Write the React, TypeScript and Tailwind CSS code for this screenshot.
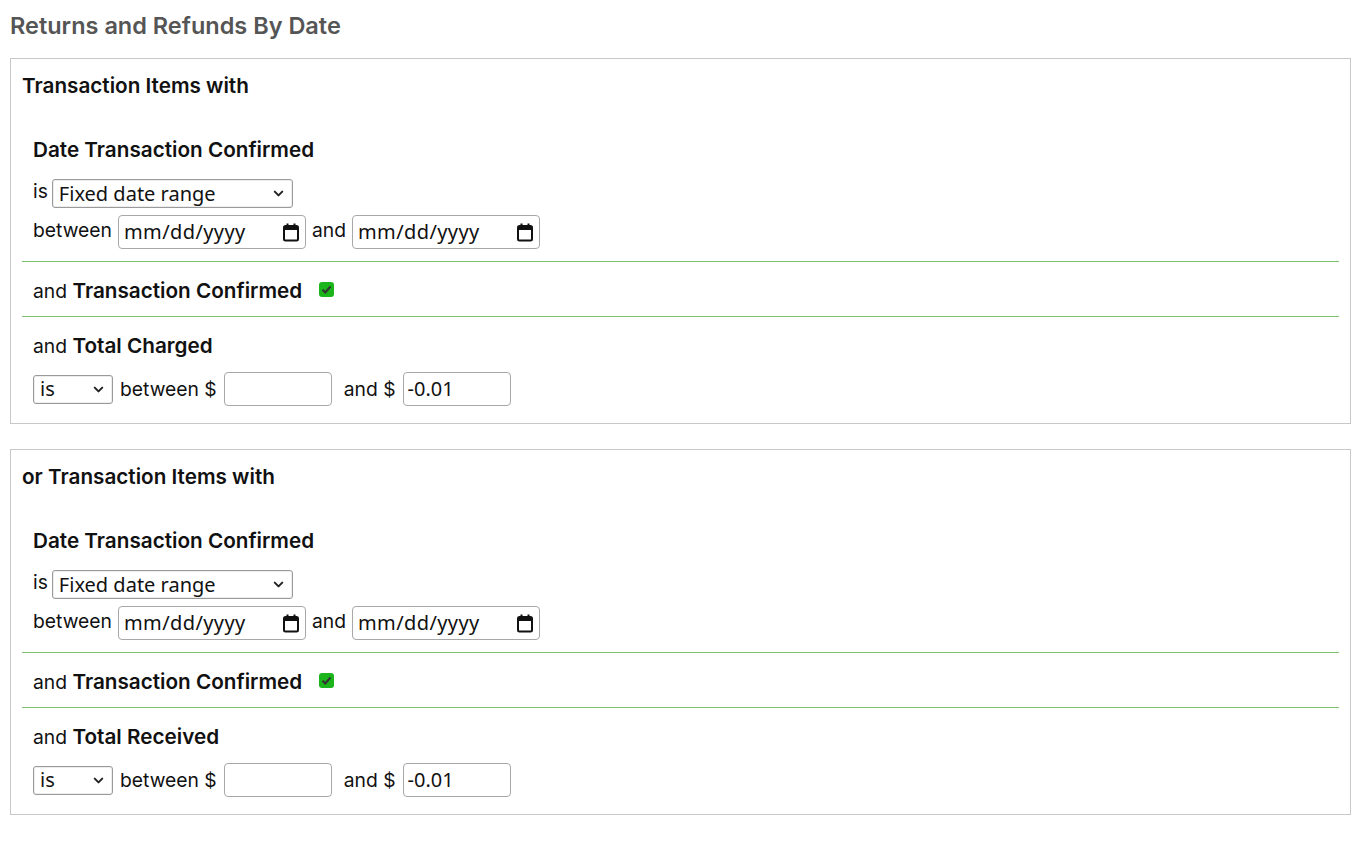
import { ChevronDown } from 'lucide-react'

const ctl = "font-['Segoe_UI','Noto_Sans',sans-serif] text-[20px] text-[#111]"

function Select({ value, w }: { value: string; w: string }) {
  return (
    <div className={`${w} h-[29px] flex items-center justify-between pl-[6px] pr-[6px] border border-[#9a9a9a] rounded-[3px] bg-white shadow-[inset_0_0_0_1px_#ededed] ${ctl}`}>
      <span className="leading-none">{value}</span>
      <ChevronDown size={15} strokeWidth={3.2} className="text-[#222]" />
    </div>
  )
}

function DateBox() {
  return (
    <div className={`w-[188px] h-[34px] flex items-center justify-between pl-[5px] pr-[5px] border border-[#a8a8a8] rounded-[4px] bg-white ${ctl}`}>
      <span className="leading-none tracking-[0.4px]">mm/dd/yyyy</span>
      <svg width="18" height="19" viewBox="0 0 18 19">
        <rect x="2" y="3" width="14" height="14.5" rx="1.5" fill="none" stroke="#111" strokeWidth="2" />
        <rect x="2" y="3" width="14" height="4" fill="#111" />
        <rect x="4.5" y="0.5" width="2" height="3" fill="#111" />
        <rect x="11.5" y="0.5" width="2" height="3" fill="#111" />
      </svg>
    </div>
  )
}

function MoneyBox({ value }: { value?: string }) {
  return (
    <div className={`w-[108px] h-[34px] flex items-center pl-[4px] border border-[#a8a8a8] rounded-[4px] bg-white ${ctl}`}>
      <span className="leading-none">{value}</span>
    </div>
  )
}

function Checked() {
  return (
    <span className="w-[15px] h-[15px] rounded-[3px] bg-[#1bb51b] inline-flex items-center justify-center">
      <svg width="11" height="11" viewBox="0 0 11 11">
        <path d="M1.5 5.8 L4.3 8.5 L9.5 2.5" fill="none" stroke="#333" strokeWidth="2.2" />
      </svg>
    </span>
  )
}

const strong = 'text-[20.7px] font-semibold'

function Group({ title, total }: { title: string; total: string }) {
  return (
    <div className="border border-[#c8c8c8] pt-[15px] pb-[17px]">
      <div className={`px-[11px] leading-[24px] ${strong}`}>{title}</div>

      <div className="mx-[11px] mt-[40px] px-[11px] pb-[12px] border-b border-[#7cc36c]">
        <div className={`leading-[24px] ${strong}`}>Date Transaction Confirmed</div>
        <div className="mt-[17px] flex items-center gap-[4px]">
          <span className="-mt-[4px]">is</span>
          <Select value="Fixed date range" w="w-[241px]" />
        </div>
        <div className="mt-[7px] flex items-center gap-[6px]">
          <span className="-mt-[4px]">between</span>
          <DateBox />
          <span className="-mt-[4px]">and</span>
          <DateBox />
        </div>
      </div>

      <div className="mx-[11px] px-[11px] pt-[17px] pb-[13px] border-b border-[#7cc36c] flex items-center gap-[17px]">
        <span className="leading-[24px]">and <b className={strong}>Transaction Confirmed</b></span>
        <span className="-mt-[4px] flex"><Checked /></span>
      </div>

      <div className="mx-[11px] px-[11px] pt-[17px]">
        <div className="leading-[24px]">and <b className={strong}>{total}</b></div>
        <div className="mt-[14px] flex items-center">
          <Select value="is" w="w-[80px]" />
          <span className="ml-[7px]">between $</span>
          <span className="ml-[7px]"><MoneyBox /></span>
          <span className="ml-[12px]">and $</span>
          <span className="ml-[7px]"><MoneyBox value="-0.01" /></span>
        </div>
      </div>
    </div>
  )
}

export default function App() {
  return (
    <div className="min-h-screen bg-white px-[10px] pt-[10px] font-['Inter',sans-serif] text-[19.3px] text-[#111]">
      <h2 className="text-[23.5px] leading-[32px] font-semibold text-[#555]">Returns and Refunds By Date</h2>
      <div className="mt-[16px] flex flex-col gap-[25px] w-[1341px]">
        <Group title="Transaction Items with" total="Total Charged" />
        <Group title="or Transaction Items with" total="Total Received" />
      </div>
    </div>
  )
}
